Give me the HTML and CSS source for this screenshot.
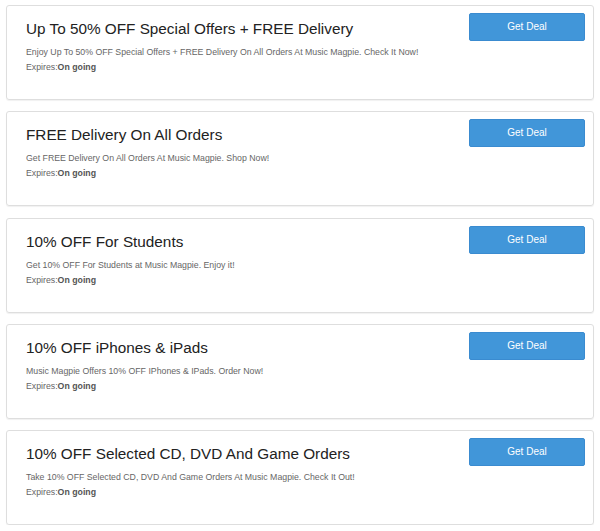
FILE: index.html
```html
<!DOCTYPE html>
<html>
<head>
<meta charset="utf-8">
<link rel="stylesheet" href="styles.css">
</head>
<body>
<div class="list">
  <div class="card">
    <div class="info">
      <h3 class="title">Up To 50% OFF Special Offers + FREE Delivery</h3>
      <p class="desc">Enjoy Up To 50% OFF Special Offers + FREE Delivery On All Orders At Music Magpie. Check It Now!</p>
      <p class="exp">Expires:<b>On going</b></p>
    </div>
    <a class="btn">Get Deal</a>
  </div>
  <div class="card">
    <div class="info">
      <h3 class="title">FREE Delivery On All Orders</h3>
      <p class="desc">Get FREE Delivery On All Orders At Music Magpie. Shop Now!</p>
      <p class="exp">Expires:<b>On going</b></p>
    </div>
    <a class="btn">Get Deal</a>
  </div>
  <div class="card">
    <div class="info">
      <h3 class="title">10% OFF For Students</h3>
      <p class="desc">Get 10% OFF For Students at Music Magpie. Enjoy it!</p>
      <p class="exp">Expires:<b>On going</b></p>
    </div>
    <a class="btn">Get Deal</a>
  </div>
  <div class="card">
    <div class="info">
      <h3 class="title">10% OFF iPhones &amp; iPads</h3>
      <p class="desc">Music Magpie Offers 10% OFF IPhones &amp; IPads. Order Now!</p>
      <p class="exp">Expires:<b>On going</b></p>
    </div>
    <a class="btn">Get Deal</a>
  </div>
  <div class="card">
    <div class="info">
      <h3 class="title">10% OFF Selected CD, DVD And Game Orders</h3>
      <p class="desc">Take 10% OFF Selected CD, DVD And Game Orders At Music Magpie. Check It Out!</p>
      <p class="exp">Expires:<b>On going</b></p>
    </div>
    <a class="btn">Get Deal</a>
  </div>
</div>
</body>
</html>
```
FILE: styles.css
```css
html, body {
  margin: 0;
  padding: 0;
  background: #fff;
  font-family: "Liberation Sans", Arial, sans-serif;
}
.list {
  display: flex;
  flex-direction: column;
  gap: 11.25px;
  padding: 5px 6px 0 6px;
}
.card {
  box-sizing: border-box;
  width: 588px;
  height: 95px;
  border: 1px solid #dedede;
  border-radius: 3px;
  box-shadow: 0 1px 1px rgba(0,0,0,0.06);
  display: flex;
  justify-content: space-between;
  align-items: flex-start;
  padding: 7px 8px 0 19px;
}
.info {
  display: flex;
  flex-direction: column;
  min-width: 0;
}
.title {
  margin: 6px 0 0 0;
  font-size: 15.3px;
  font-weight: normal;
  color: #222;
  line-height: 20px;
}
.desc {
  margin: 6px 0 0 0;
  font-size: 8.75px;
  line-height: 15px;
  color: #666;
  white-space: nowrap;
}
.exp {
  margin: 0;
  font-size: 8.75px;
  line-height: 15px;
  color: #666;
}
.exp b {
  color: #555;
}
.btn {
  flex: none;
  box-sizing: border-box;
  width: 116px;
  height: 28px;
  background: #4196d9;
  border: 1px solid #3a8bd0;
  border-radius: 2px;
  color: #fff;
  font-size: 10px;
  line-height: 26px;
  text-align: center;
}
```
